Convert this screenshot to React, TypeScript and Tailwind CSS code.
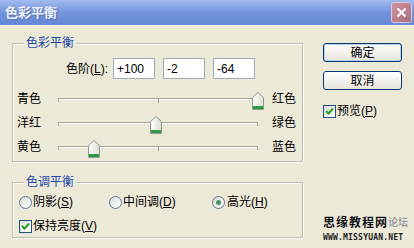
const FONT = "font-['Liberation_Sans','Noto_Sans_CJK_SC',sans-serif]";

function Thumb({ left }: { left: number }) {
  return (
    <svg
      className="absolute top-[5px]"
      style={{ left: left - 6 }}
      width="12"
      height="18"
      viewBox="0 0 12 18"
    >
      <defs>
        <linearGradient id="tg" x1="0" y1="0" x2="1" y2="0">
          <stop offset="0" stopColor="#ffffff" />
          <stop offset="1" stopColor="#dcdcd2" />
        </linearGradient>
      </defs>
      <path d="M0.5 5.5 L6 0.5 L11.5 5.5 V17.5 H0.5 Z" fill="url(#tg)" stroke="#8d9a8d" />
      <rect x="1" y="14" width="10" height="3" fill="#2f9a45" />
    </svg>
  );
}

function SliderRow({ left, right, value }: { left: string; right: string; value: number }) {
  return (
    <div className="flex h-[24px] items-center pl-[4px]">
      <span className="w-[41px] text-[12px]">{left}</span>
      <div className="relative flex h-[24px] w-[200px] items-center">
        <div className="h-[2px] w-full border-t border-[#a5a394] bg-white" />
        <div className="absolute left-0 top-[12px] h-[3px] w-px bg-[#b9b7aa]" />
        <div className="absolute left-[100px] top-[12px] h-[4px] w-px bg-[#a5a394]" />
        <div className="absolute left-[199px] top-[12px] h-[3px] w-px bg-[#b9b7aa]" />
        <Thumb left={value + 100} />
      </div>
      <span className="ml-[14px] text-[12px]">{right}</span>
    </div>
  );
}

function Radio({ checked }: { checked?: boolean }) {
  return (
    <span className="flex h-[13px] w-[13px] items-center justify-center rounded-full border border-[#5a7a9a] bg-gradient-to-br from-[#dcdcd4] to-white">
      {checked && <span className="h-[5px] w-[5px] rounded-full bg-[#4f8f5a]" />}
    </span>
  );
}

function Check() {
  return (
    <span className="flex h-[13px] w-[13px] items-center justify-center border border-[#1c5180] bg-gradient-to-br from-[#dcdcd4] to-white">
      <svg width="9" height="9" viewBox="0 0 9 9">
        <path d="M1 4 L3.5 6.5 L8 1.5" fill="none" stroke="#21a121" strokeWidth="2" />
      </svg>
    </span>
  );
}

export default function App() {
  return (
    <div className={`h-[248px] w-[414px] overflow-hidden bg-[#ece9d8] text-[#000] ${FONT} leading-[14px]`}>
      {/* title bar */}
      <div className="flex h-[25px] items-center justify-between bg-gradient-to-b from-[#a3baf0] via-[#7394dc] to-[#6687d4] pl-[5px] pr-[2px]">
        <span className="text-[13px] font-bold text-[#eef1fa] [text-shadow:1px_1px_1px_#5a72b0]">色彩平衡</span>
        <span className="flex h-[21px] w-[21px] items-center justify-center rounded-[3px] border border-[#d8c8e0] bg-gradient-to-br from-[#d0949e] to-[#a8707e]">
          <svg width="11" height="11" viewBox="0 0 11 11">
            <path d="M1.5 1.5 L9.5 9.5 M9.5 1.5 L1.5 9.5" stroke="#fff" strokeWidth="2" />
          </svg>
        </span>
      </div>
      <div className="h-px bg-[#f6f4ea]" />

      <div className="flex">
        <div className="ml-[12px] w-[291px]">
          <fieldset className="mt-[10px] border border-[#bebbab] pb-[2px] shadow-[inset_1px_1px_0_#fff,1px_1px_0_#fff]">
            <legend className="ml-[11px] bg-[#ece9d8] px-[2px] text-[12px] text-[#1c4aa8]">色彩平衡</legend>
            <div className="mt-[8px] flex items-center">
              <span className="w-[95px] text-right text-[12px]">
                色阶(<span className="underline">L</span>):
              </span>
              <div className="ml-[5px] flex gap-[8px]">
                {["+100", "-2", "-64"].map((v) => (
                  <div
                    key={v}
                    className="flex h-[21px] w-[42px] items-center border border-[#9eaab8] bg-white pl-[3px] text-[12px]"
                  >
                    {v}
                  </div>
                ))}
              </div>
            </div>
            <div className="mt-[8px]">
              <SliderRow left="青色" right="红色" value={100} />
              <SliderRow left="洋红" right="绿色" value={-2} />
              <SliderRow left="黄色" right="蓝色" value={-64} />
            </div>
          </fieldset>

          <fieldset className="mt-[13px] border border-[#bebbab] pb-[3px] shadow-[inset_1px_1px_0_#fff,1px_1px_0_#fff]">
            <legend className="ml-[11px] bg-[#ece9d8] px-[2px] text-[12px] text-[#1c4aa8]">色调平衡</legend>
            <div className="mt-[5px] flex h-[16px] items-center pl-[6px] text-[12px]">
              <div className="flex w-[90px] items-center gap-[1px]">
                <Radio />
                <span>
                  阴影(<span className="underline">S</span>)
                </span>
              </div>
              <div className="flex w-[103px] items-center gap-[1px]">
                <Radio />
                <span>
                  中间调(<span className="underline">D</span>)
                </span>
              </div>
              <div className="flex items-center gap-[2px]">
                <Radio checked />
                <span>
                  高光(<span className="underline">H</span>)
                </span>
              </div>
            </div>
            <div className="mt-[8px] flex h-[16px] items-center gap-[1px] pl-[6px] text-[12px]">
              <Check />
              <span>
                保持亮度(<span className="underline">V</span>)
              </span>
            </div>
          </fieldset>
        </div>

        <div className="ml-[20px] flex w-[88px] flex-col pt-[17px]">
          <button className="h-[19px] w-[79px] rounded-[3px] border border-[#003c74] bg-gradient-to-b from-white to-[#e6e4dc] text-[12px] shadow-[inset_0_0_0_1px_#b8ccec]">
            确定
          </button>
          <button className="mt-[9px] h-[19px] w-[79px] rounded-[3px] border border-[#003c74] bg-gradient-to-b from-white to-[#e6e4dc] text-[12px]">
            取消
          </button>
          <div className="mt-[14px] flex items-center gap-[1px] text-[12px]">
            <Check />
            <span>
              预览(<span className="underline">P</span>)
            </span>
          </div>
          <div className="mt-[98px] flex items-end whitespace-nowrap text-[12px] font-bold leading-[14px] tracking-[1px] text-[#111] [text-shadow:0_0_1px_#fff]">
            思缘教程网<span className="text-[10px] tracking-[0px] text-[#9a9a9a]">论坛</span>
          </div>
          <div className="mt-[4px] whitespace-nowrap font-['DejaVu_Sans_Mono',monospace] text-[8px] font-bold leading-[8px] tracking-[0.2px] text-[#222]">
            WWW.MISSYUAN.NET
          </div>
        </div>
      </div>
    </div>
  );
}
